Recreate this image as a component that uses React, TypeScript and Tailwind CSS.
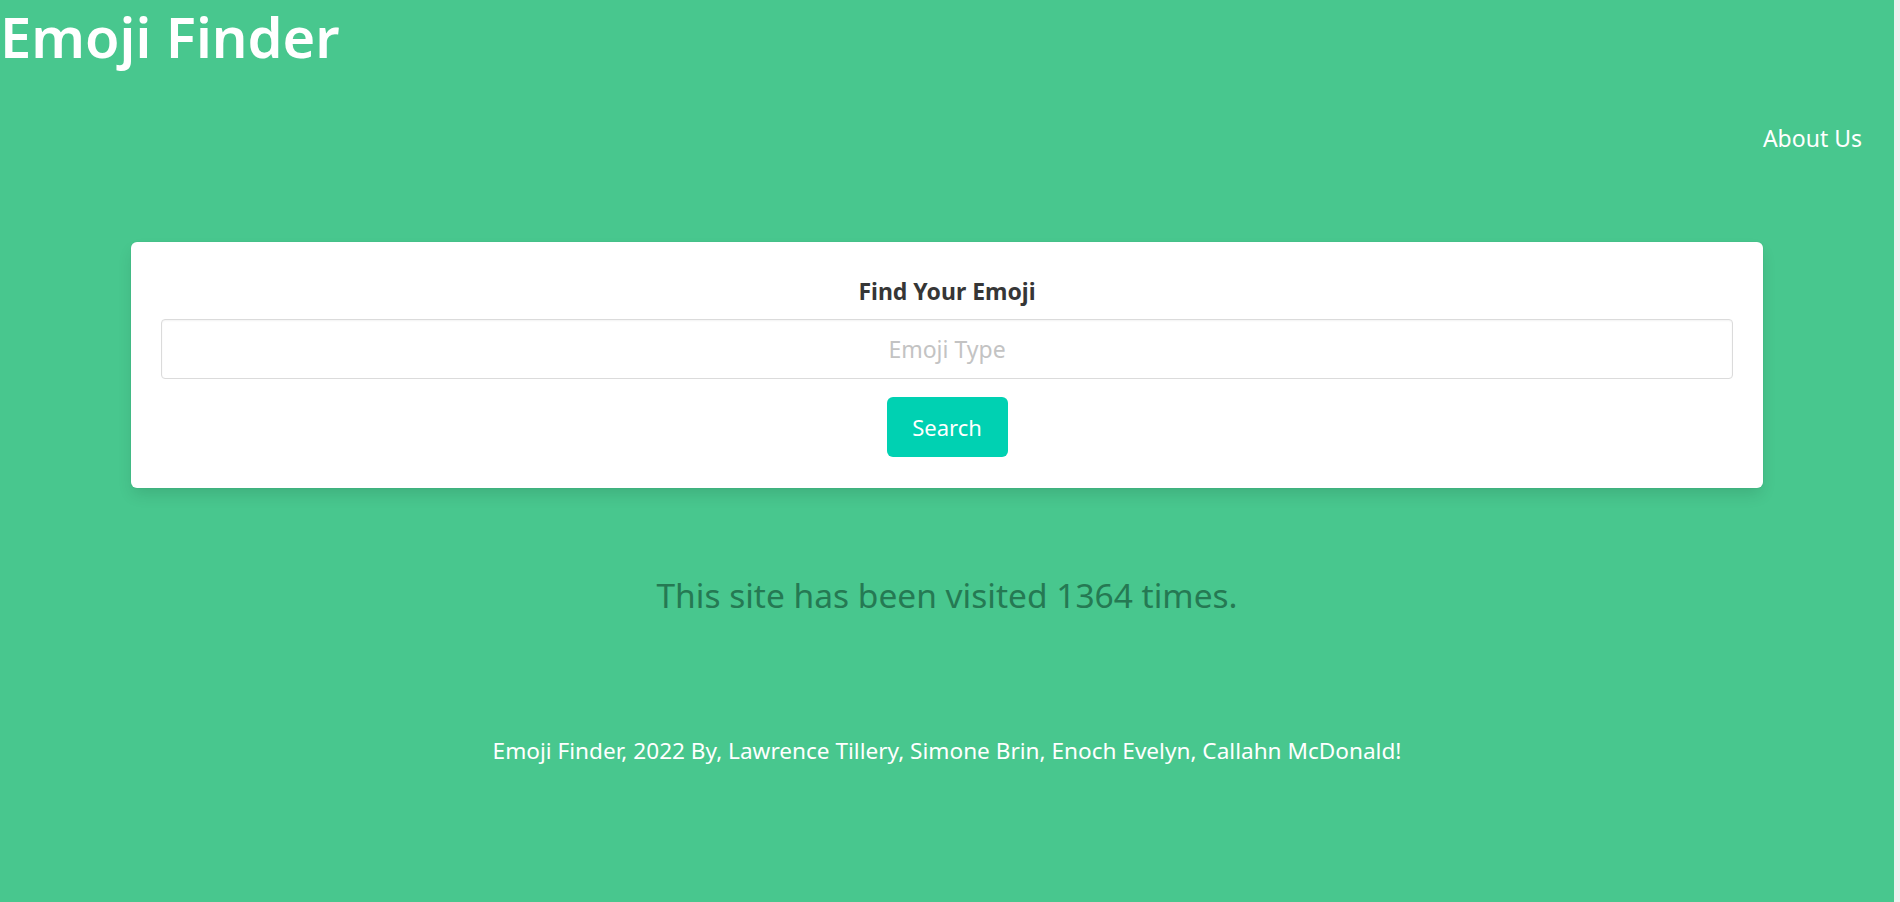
import { useState } from "react";

// Emoji Finder landing page — search card, visit counter and credits footer.
const VISITS = 1364;
const AUTHORS = ["Lawrence Tillery", "Simone Brin", "Enoch Evelyn", "Callahn McDonald"];

export default function App() {
  const [query, setQuery] = useState("");

  return (
    <div className="min-h-screen bg-[#f0f0f0] font-['Noto_Sans','Open_Sans',sans-serif]">
      <div className="flex min-h-[902px] w-[1894px] flex-col bg-[#48c78e]">
        <header>
          <h1 className="text-[56px] font-semibold leading-[72px] text-white">Emoji Finder</h1>
          <nav className="mt-[48px] flex justify-end pr-[32px]">
            <a href="#" className="text-[23px] leading-[36px] text-white">
              About Us
            </a>
          </nav>
        </header>

        <main className="mx-auto mt-[86px] w-[1632px] rounded-[6px] bg-white px-[30px] pb-[31px] pt-[35px] shadow-[0_8px_16px_-2px_rgba(10,10,10,0.12),0_0_0_1px_rgba(10,10,10,0.02)]">
          <h2 className="text-center text-[23px] font-bold leading-[28px] text-[#363636]">
            Find Your Emoji
          </h2>
          <input
            type="text"
            value={query}
            onChange={(e) => setQuery(e.target.value)}
            placeholder="Emoji Type"
            className="mt-[14px] block h-[60px] w-full rounded-[4px] border border-[#dbdbdb] px-4 text-center text-[23px] text-[#363636] shadow-[inset_0_1px_2px_rgba(10,10,10,0.05)] outline-none placeholder:text-[#c3c3c3]"
          />
          <div className="mt-[18px] flex justify-center">
            <button
              type="button"
              className="h-[60px] w-[121px] rounded-[6px] bg-[#00d1b2] text-[22px] text-white"
            >
              Search
            </button>
          </div>
        </main>

        <p className="mt-[87px] text-center text-[33.5px] leading-[40px] text-[#257953]">
          This site has been visited {VISITS} times.
        </p>

        <footer className="mt-[121px] text-center text-[22.6px] leading-[30px] text-white">
          Emoji Finder, 2022 By, {AUTHORS.join(", ")}!
        </footer>
      </div>
    </div>
  );
}
